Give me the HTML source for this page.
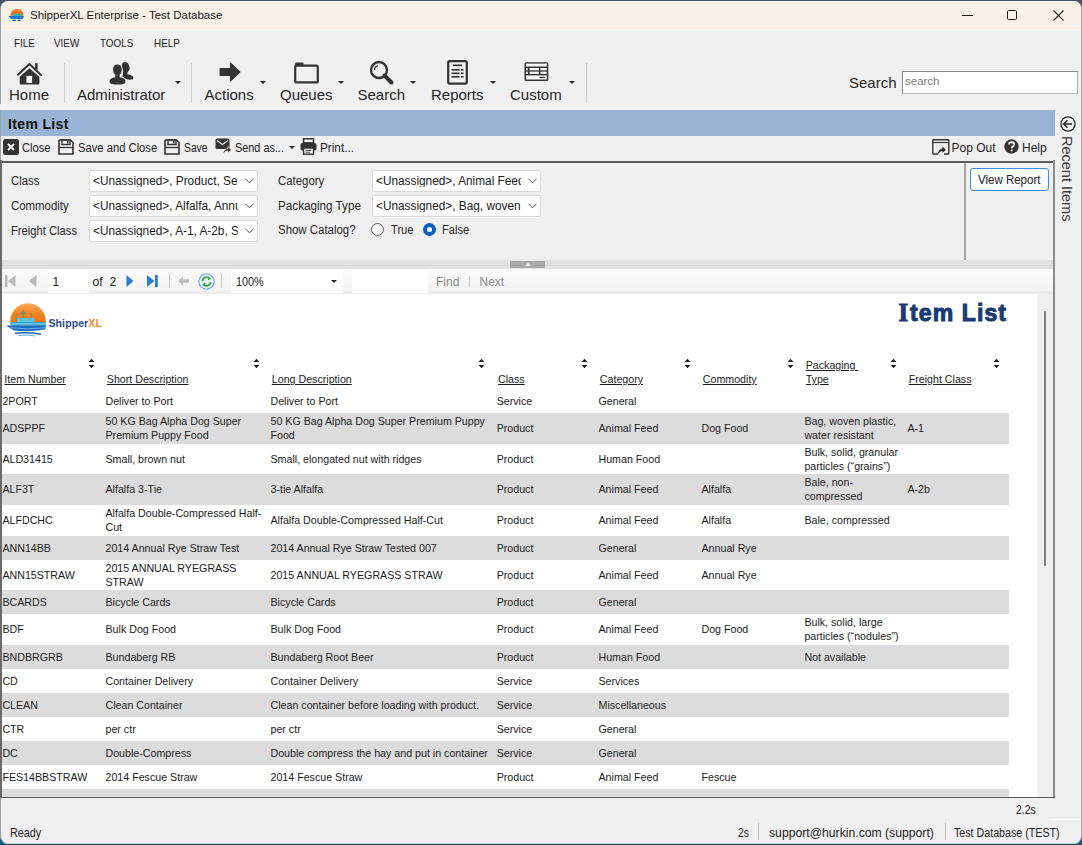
<!DOCTYPE html>
<html><head><meta charset="utf-8"><title>ShipperXL</title><style>*{margin:0;padding:0;box-sizing:border-box}
html,body{width:1082px;height:845px;overflow:hidden}
body{position:relative;background:linear-gradient(#4a5468 0,#4a5468 20px,#1c5a72 825px,#0f5a80 845px);font-family:"Liberation Sans",sans-serif;color:#1e1e1e}
.a{position:absolute;white-space:nowrap;line-height:1}
.ui{font-size:11.5px;color:#222}
.tb{font-size:15px;color:#262626}
.sep{position:absolute;width:1px;background:#cfcfcf}
.dd{position:absolute;width:0;height:0;border-left:3px solid transparent;border-right:3px solid transparent;border-top:3px solid #222}
.r{font-size:10.67px;color:#1c1c1c;position:absolute;white-space:nowrap;line-height:14px}
.hd{font-size:10.67px;color:#1c1c1c;position:absolute;white-space:nowrap;text-decoration:underline;line-height:14px}
svg{position:absolute;overflow:visible}</style></head><body>
<div class="a" style="left:0;top:1px;width:1082px;height:843px;background:#f0f0f0;border-radius:8px;border-left:1px solid #98a2ac;border-right:1px solid #a4a6a8;border-bottom:1px solid #c8d4d8"></div>
<div class="a" style="left:1px;top:1px;width:1080px;height:30px;background:linear-gradient(#f9f1e8 0,#f9f1e8 27px,#f8f4ea 28px,#f4f2ee 30px);border-radius:8px 8px 0 0;border-top:1px solid #f4f4f4"></div>
<svg style="left:8px;top:8px" width="17" height="14" viewBox="0 0 17 14">
<path d="M2.3 7.8 A6.7 6.7 0 0 1 15.7 7.8 Z" fill="#f46a1c"/>
<path d="M4.5 3.5 L6.5 1.8 L8 3 L10 1.5 L12.5 3.5 Z" fill="#f7902e"/>
<rect x="4.5" y="5.6" width="9" height="2.4" fill="#2fb0a8"/>
<path d="M0.3 8.1 L16.2 8.1 L14.6 11 L3 11 Z" fill="#1b78cc"/>
<path d="M4.5 12.4 L8 12.4 M9.5 12.4 L12.5 12.4" stroke="#2355b0" stroke-width="1.1"/>
</svg>
<div class="a" style="left:30px;top:10px;font-size:11.5px;color:#1a1a1a">ShipperXL Enterprise - Test Database</div>
<div class="a" style="left:962px;top:15px;width:11px;height:1px;background:#1a1a1a"></div>
<div class="a" style="left:1007px;top:10px;width:10px;height:10px;border:1px solid #1a1a1a;border-radius:1.5px"></div>
<svg style="left:1053px;top:10px" width="11" height="11" viewBox="0 0 11 11"><path d="M0.5 0.5 L10.5 10.5 M10.5 0.5 L0.5 10.5" stroke="#222" stroke-width="1.1"/></svg>
<div class="a" style="left:13.5px;top:38px;font-size:11.5px;color:#1e1e1e;transform:scaleX(0.86);transform-origin:0 0">FILE</div>
<div class="a" style="left:53.5px;top:38px;font-size:11.5px;color:#1e1e1e;transform:scaleX(0.86);transform-origin:0 0">VIEW</div>
<div class="a" style="left:99.5px;top:38px;font-size:11.5px;color:#1e1e1e;transform:scaleX(0.86);transform-origin:0 0">TOOLS</div>
<div class="a" style="left:153.5px;top:38px;font-size:11.5px;color:#1e1e1e;transform:scaleX(0.86);transform-origin:0 0">HELP</div>
<div class="sep" style="left:64px;top:63px;height:40px"></div>
<div class="sep" style="left:191px;top:63px;height:40px"></div>
<div class="sep" style="left:586px;top:63px;height:40px"></div>
<div class="a tb" style="left:9px;top:87px">Home</div>
<div class="a tb" style="left:77px;top:87px">Administrator</div>
<div class="a tb" style="left:204.5px;top:87px">Actions</div>
<div class="a tb" style="left:280px;top:87px">Queues</div>
<div class="a tb" style="left:357.5px;top:87px">Search</div>
<div class="a tb" style="left:431px;top:87px">Reports</div>
<div class="a tb" style="left:510px;top:87px">Custom</div>
<div class="dd" style="left:175px;top:81px"></div>
<div class="dd" style="left:260px;top:81px"></div>
<div class="dd" style="left:338px;top:81px"></div>
<div class="dd" style="left:410px;top:81px"></div>
<div class="dd" style="left:490px;top:81px"></div>
<div class="dd" style="left:569px;top:81px"></div>
<svg style="left:17px;top:62px" width="26" height="24" viewBox="0 0 26 24">
<path d="M1 12.8 L12.4 2 L24 13" fill="none" stroke="#333333" stroke-width="1.9" stroke-linecap="round" stroke-linejoin="round"/>
<rect x="18.1" y="1.2" width="2.5" height="6.5" fill="#333333"/>
<path d="M2.7 14.8 L12.4 6.3 L22.4 14.8 L22.4 21.6 Q22.4 22.6 21.4 22.6 L3.7 22.6 Q2.7 22.6 2.7 21.6 Z" fill="#333333"/>
<rect x="9.4" y="13.9" width="5.7" height="7" fill="#f7f7f7"/>
</svg>
<svg style="left:108px;top:61px" width="27" height="25" viewBox="0 0 27 25">
<ellipse cx="17.6" cy="6.2" rx="3.9" ry="5.2" transform="rotate(-18 17.6 6.2)" fill="#333333"/>
<path d="M15.2 9 L19.8 9.6 L19.3 13.2 Q24.6 14 25.3 16.4 Q25.8 18.6 22.3 18.7 Q16.5 18.5 14.5 15.5 Z" fill="#333333"/>
<path d="M9.4 2.6 Q14.6 2.6 14.6 8.7 Q14.6 12.5 12.4 14.1 L12.5 15.4 Q18.3 16.2 18.3 20.4 Q18.3 24.3 9.45 24.3 Q0.7 24.3 0.7 20.4 Q0.7 16.2 6.4 15.4 L6.5 14.1 Q4.2 12.5 4.2 8.7 Q4.2 2.6 9.4 2.6 Z" fill="#f0f0f0"/>
<path d="M9.4 3.6 Q13.7 3.6 13.7 8.7 Q13.7 12.2 11.6 13.8 L11.7 16.2 Q17.5 16.9 17.5 20.4 Q17.5 23.6 9.45 23.6 Q1.5 23.6 1.5 20.4 Q1.5 16.9 7.2 16.2 L7.3 13.8 Q5.1 12.2 5.1 8.7 Q5.1 3.6 9.4 3.6 Z" fill="#333333"/>
</svg>
<svg style="left:219px;top:62px" width="22" height="20" viewBox="0 0 22 20">
<path d="M1.5 6 Q0.5 6 0.5 7 L0.5 13 Q0.5 14 1.5 14 L11 14 L11 18.5 Q11 20 12.3 19 L21 10.8 Q21.8 10 21 9.2 L12.3 1 Q11 0 11 1.5 L11 6 Z" fill="#333333"/>
</svg>
<svg style="left:294px;top:62px" width="25" height="21" viewBox="0 0 25 21">
<rect x="1.2" y="3.6" width="22.6" height="16.8" rx="1.5" fill="none" stroke="#333333" stroke-width="2.2"/>
<path d="M1.2 4 L1.2 1.5 Q1.2 0.5 2.2 0.5 L8.5 0.5 Q9.3 0.5 9.5 1.5 L9.8 3.6 Z" fill="#333333"/>
</svg>
<svg style="left:369px;top:60px" width="25" height="25" viewBox="0 0 25 25">
<circle cx="10" cy="10" r="8" fill="none" stroke="#333333" stroke-width="2.4"/>
<path d="M5.5 10 A4.5 4.5 0 0 1 9 5.6" fill="none" stroke="#333333" stroke-width="1.3"/>
<path d="M15.5 15.5 L22.5 22.5" stroke="#333333" stroke-width="4" stroke-linecap="round"/>
</svg>
<svg style="left:447px;top:60px" width="21" height="25" viewBox="0 0 21 25">
<rect x="1.2" y="1.2" width="18.6" height="22.4" rx="1.5" fill="none" stroke="#333333" stroke-width="2.2"/>
<rect x="6" y="4.5" width="9" height="1.6" fill="#333333"/>
<rect x="4.5" y="9" width="8" height="1.6" fill="#333333"/><rect x="14" y="9" width="2.5" height="1.6" fill="#333333"/>
<rect x="4.5" y="12.5" width="8" height="1.6" fill="#333333"/><rect x="14" y="12.5" width="2.5" height="1.6" fill="#333333"/>
<rect x="4.5" y="16" width="8" height="1.6" fill="#333333"/><rect x="14" y="16" width="2.5" height="1.6" fill="#333333"/>
</svg>
<svg style="left:524px;top:62px" width="25" height="19" viewBox="0 0 25 19">
<rect x="0.5" y="0.2" width="23.8" height="18.8" rx="1.6" fill="#333333"/>
<rect x="2" y="1.6" width="20.8" height="2.9" fill="#fafafa"/>
<rect x="2" y="6" width="1.8" height="2.3" fill="#fafafa"/><rect x="5.6" y="6" width="9.3" height="2.3" fill="#fafafa"/><rect x="16.5" y="6" width="6.3" height="2.3" fill="#fafafa"/>
<rect x="2" y="9.6" width="1.8" height="2.3" fill="#fafafa"/><rect x="5.6" y="9.6" width="9.3" height="2.3" fill="#fafafa"/><rect x="16.5" y="9.6" width="6.3" height="2.3" fill="#fafafa"/>
<rect x="2" y="13.4" width="20.8" height="4.1" fill="#fafafa"/>
<rect x="15.5" y="14.8" width="5.7" height="1.3" fill="#333333"/>
</svg>
<div class="a tb" style="left:849px;top:75px">Search</div>
<div class="a" style="left:902px;top:71px;width:176px;height:23px;background:#fff;border:1px solid #8a8a8a;border-bottom-color:#b4b4b4;border-right-color:#b4b4b4"></div>
<div class="a" style="left:905px;top:76px;font-size:11.5px;color:#7a7a7a">search</div>
<div class="a" style="left:0;top:104px;width:1055px;height:6px;background:#f3f3f3"></div>
<div class="a" style="left:1px;top:110px;width:1054px;height:26px;background:#98b3d3"></div>
<div class="a" style="left:8px;top:117px;font-size:14px;font-weight:bold;color:#111;letter-spacing:0.35px">Item List</div>
<svg style="left:3px;top:139px" width="16" height="16" viewBox="0 0 16 16"><rect x="0" y="0" width="16" height="16" rx="2.5" fill="#333"/><path d="M5 5 L11 11 M11 5 L5 11" stroke="#fff" stroke-width="1.8"/></svg>
<svg style="left:58px;top:139px" width="16" height="16" viewBox="0 0 16 16"><path d="M1.5 1 L12.5 1 L15 3.5 L15 15 L1 15 L1 1.5 Z" fill="none" stroke="#333" stroke-width="1.6"/><rect x="4" y="1" width="8" height="4.5" fill="none" stroke="#333" stroke-width="1.4"/><rect x="9" y="2" width="1.5" height="2.5" fill="#333"/><path d="M1 8.5 L15 8.5" stroke="#333" stroke-width="1.3"/></svg>
<svg style="left:164px;top:139px" width="16" height="16" viewBox="0 0 16 16"><path d="M1.5 1 L12.5 1 L15 3.5 L15 15 L1 15 L1 1.5 Z" fill="none" stroke="#333" stroke-width="1.6"/><rect x="4" y="1" width="8" height="4.5" fill="none" stroke="#333" stroke-width="1.4"/><rect x="9" y="2" width="1.5" height="2.5" fill="#333"/><path d="M1 8.5 L15 8.5" stroke="#333" stroke-width="1.3"/></svg>
<div class="a ui" style="left:22px;top:142px;font-size:12px;transform:scaleX(0.93);transform-origin:0 0">Close</div>
<div class="a ui" style="left:77.5px;top:142px;font-size:12px;transform:scaleX(0.935);transform-origin:0 0">Save and Close</div>
<div class="a ui" style="left:183.5px;top:142px;font-size:12px;transform:scaleX(0.86);transform-origin:0 0">Save</div>
<div class="a ui" style="left:234.5px;top:142px;font-size:12px;transform:scaleX(0.905);transform-origin:0 0">Send as...</div>
<div class="a ui" style="left:320px;top:142px;font-size:12px;transform:scaleX(0.98);transform-origin:0 0">Print...</div>
<svg style="left:215px;top:138px" width="17" height="17" viewBox="0 0 17 17"><rect x="0.5" y="0.5" width="14" height="10.5" rx="1.5" fill="#333"/><path d="M2 2.5 L7.5 6.5 L13 2.5" fill="none" stroke="#f0f0f0" stroke-width="1.1"/><path d="M8 16 Q8.5 11 13 10.5 L13 8.5 L16.5 12 L13 15 L13 13 Q10 13 8 16 Z" fill="#333" stroke="#f0f0f0" stroke-width="0.8"/></svg>
<div class="dd" style="left:289px;top:146px"></div>
<svg style="left:300px;top:138px" width="17" height="17" viewBox="0 0 17 17"><rect x="3.5" y="0.8" width="10" height="4" fill="none" stroke="#333" stroke-width="1.5"/><rect x="0.5" y="5" width="16" height="7.5" rx="1.8" fill="#333"/><rect x="3.5" y="10" width="10" height="6.2" fill="#f0f0f0" stroke="#333" stroke-width="1.4"/><path d="M5.5 12.3 L11.5 12.3 M5.5 14.2 L10 14.2" stroke="#333" stroke-width="0.9"/></svg>
<svg style="left:932px;top:139px" width="18" height="16" viewBox="0 0 18 16"><path d="M6 15 L1.5 15 Q0.8 15 0.8 14.2 L0.8 1.5 Q0.8 0.8 1.5 0.8 L16 0.8 Q16.8 0.8 16.8 1.5 L16.8 14.2 Q16.8 15 16 15 L12 15" fill="none" stroke="#333" stroke-width="1.4"/><path d="M0.8 3.5 L16.8 3.5" stroke="#333" stroke-width="1.2"/><path d="M6 15.5 Q6 10 10.5 9.5 L10.5 7.5 L14 10.8 L10.5 14 L10.5 12 Q8 12 6 15.5 Z" fill="#333"/></svg>
<div class="a ui" style="left:951.5px;top:142px;font-size:12px">Pop Out</div>
<svg style="left:1004px;top:139px" width="15" height="15" viewBox="0 0 15 15"><circle cx="7.5" cy="7.5" r="7.2" fill="#333"/><path d="M5 5.6 Q5 3.2 7.6 3.2 Q10.2 3.3 10.2 5.5 Q10.2 6.9 8.6 7.6 Q7.7 8 7.7 9.3" fill="none" stroke="#fff" stroke-width="1.7"/><rect x="6.8" y="10.5" width="1.8" height="1.8" fill="#fff"/></svg>
<div class="a ui" style="left:1022px;top:142px;font-size:12px">Help</div>
<div class="a" style="left:0;top:161px;width:1055px;height:2px;background:#5a5a5a"></div>
<div class="a" style="left:0;top:160px;width:2px;height:638px;background:#6a6a6a"></div>
<div class="a" style="left:1053px;top:160px;width:2px;height:638px;background:#8c8c8c"></div>
<div class="a ui" style="left:11px;top:175px;font-size:12px;color:#262626;transform:scaleX(0.95);transform-origin:0 0">Class</div>
<div class="a ui" style="left:11px;top:200px;font-size:12px;color:#262626;transform:scaleX(0.95);transform-origin:0 0">Commodity</div>
<div class="a ui" style="left:11px;top:225px;font-size:12px;color:#262626;transform:scaleX(0.934);transform-origin:0 0">Freight Class</div>
<div class="a ui" style="left:278px;top:175px;font-size:12px;color:#262626;transform:scaleX(0.95);transform-origin:0 0">Category</div>
<div class="a ui" style="left:278px;top:200px;font-size:12px;color:#262626;transform:scaleX(0.974);transform-origin:0 0">Packaging Type</div>
<div class="a ui" style="left:278px;top:224px;font-size:12px;color:#262626;transform:scaleX(0.953);transform-origin:0 0">Show Catalog?</div>
<div class="a" style="left:89px;top:170px;width:169px;height:22px;background:#fff;border:1px solid #d9d9d9;border-radius:2px;overflow:hidden"><div class="a" style="left:3px;top:4px;font-size:12px;color:#1a1a1a;width:147.2px;overflow:hidden;transform:scaleX(0.985);transform-origin:0 0">&lt;Unassigned&gt;, Product, Service</div><svg style="left:155px;top:7px" width="9" height="6" viewBox="0 0 9 6"><path d="M0.5 0.8 L4.5 4.8 L8.5 0.8" fill="none" stroke="#555" stroke-width="1"/></svg></div>
<div class="a" style="left:89px;top:195px;width:169px;height:22px;background:#fff;border:1px solid #d9d9d9;border-radius:2px;overflow:hidden"><div class="a" style="left:3px;top:4px;font-size:12px;color:#1a1a1a;width:147.2px;overflow:hidden;transform:scaleX(0.985);transform-origin:0 0">&lt;Unassigned&gt;, Alfalfa, Annual</div><svg style="left:155px;top:7px" width="9" height="6" viewBox="0 0 9 6"><path d="M0.5 0.8 L4.5 4.8 L8.5 0.8" fill="none" stroke="#555" stroke-width="1"/></svg></div>
<div class="a" style="left:89px;top:220px;width:169px;height:22px;background:#fff;border:1px solid #d9d9d9;border-radius:2px;overflow:hidden"><div class="a" style="left:3px;top:4px;font-size:12px;color:#1a1a1a;width:147.2px;overflow:hidden;transform:scaleX(0.985);transform-origin:0 0">&lt;Unassigned&gt;, A-1, A-2b, Std</div><svg style="left:155px;top:7px" width="9" height="6" viewBox="0 0 9 6"><path d="M0.5 0.8 L4.5 4.8 L8.5 0.8" fill="none" stroke="#555" stroke-width="1"/></svg></div>
<div class="a" style="left:372px;top:170px;width:169px;height:22px;background:#fff;border:1px solid #d9d9d9;border-radius:2px;overflow:hidden"><div class="a" style="left:3px;top:4px;font-size:12px;color:#1a1a1a;width:147.2px;overflow:hidden;transform:scaleX(0.985);transform-origin:0 0">&lt;Unassigned&gt;, Animal Feed</div><svg style="left:155px;top:7px" width="9" height="6" viewBox="0 0 9 6"><path d="M0.5 0.8 L4.5 4.8 L8.5 0.8" fill="none" stroke="#555" stroke-width="1"/></svg></div>
<div class="a" style="left:372px;top:195px;width:169px;height:22px;background:#fff;border:1px solid #d9d9d9;border-radius:2px;overflow:hidden"><div class="a" style="left:3px;top:4px;font-size:12px;color:#1a1a1a;width:147.2px;overflow:hidden;transform:scaleX(0.985);transform-origin:0 0">&lt;Unassigned&gt;, Bag, woven plastic</div><svg style="left:155px;top:7px" width="9" height="6" viewBox="0 0 9 6"><path d="M0.5 0.8 L4.5 4.8 L8.5 0.8" fill="none" stroke="#555" stroke-width="1"/></svg></div>
<div class="a" style="left:371px;top:223px;width:13px;height:13px;border:1px solid #5a5a5a;border-radius:50%;background:#fff"></div>
<div class="a ui" style="left:391px;top:224px;font-size:12px;color:#262626;transform:scaleX(0.93);transform-origin:0 0">True</div>
<div class="a" style="left:423px;top:223px;width:13px;height:13px;border-radius:50%;background:#0a5fc4"></div>
<div class="a" style="left:427px;top:227px;width:5px;height:5px;border-radius:50%;background:#fff"></div>
<div class="a ui" style="left:442px;top:224px;font-size:12px;color:#262626;transform:scaleX(0.93);transform-origin:0 0">False</div>
<div class="a" style="left:964px;top:163px;width:2px;height:98px;background:#a4a4a4"></div>
<div class="a" style="left:970px;top:168px;width:79px;height:23px;border:1px solid #3c8fdc;border-radius:3px;background:#fdfdfd"></div>
<div class="a ui" style="left:977.5px;top:174px;font-size:12px;color:#222;transform:scaleX(0.958);transform-origin:0 0">View Report</div>
<div class="a" style="left:2px;top:260px;width:1051px;height:9px;background:#e1e1e1"></div>
<div class="a" style="left:2px;top:265px;width:1051px;height:1px;background:#dadada"></div>
<div class="a" style="left:510px;top:261px;width:35px;height:7px;background:#a9a9a9"></div>
<div class="a" style="left:525px;top:263px;width:0;height:0;border-left:3px solid transparent;border-right:3px solid transparent;border-bottom:3px solid #eee"></div>
<div class="a" style="left:2px;top:269px;width:1051px;height:25px;background:linear-gradient(#fbfbfb,#f1f1f1)"></div>
<div class="a" style="left:2px;top:291px;width:1051px;height:3px;background:#ececec"></div>
<div class="a" style="left:48px;top:269px;width:41px;height:24px;background:#fff"></div>
<div class="a" style="left:231px;top:269px;width:112px;height:24px;background:#fff"></div>
<div class="a" style="left:352px;top:269px;width:76px;height:24px;background:#fff"></div>
<div class="a ui" style="left:52.5px;top:276px;font-size:12px;color:#222">1</div>
<div class="a ui" style="left:92.5px;top:276px;font-size:12px;color:#222">of</div>
<div class="a ui" style="left:109.5px;top:276px;font-size:12px;color:#222">2</div>
<div class="a ui" style="left:235.5px;top:276px;font-size:12px;color:#222;transform:scaleX(0.9);transform-origin:0 0">100%</div>
<div class="dd" style="left:331px;top:280px;border-top-width:3px"></div>
<div class="a ui" style="left:436px;top:276px;font-size:12px;color:#8a8a8a">Find</div>
<div class="a" style="left:469px;top:276px;width:1px;height:11px;background:#c8c8c8"></div>
<div class="a ui" style="left:479.5px;top:276px;font-size:12px;color:#8a8a8a">Next</div>
<svg style="left:5px;top:275px" width="11" height="12" viewBox="0 0 11 12"><rect x="0" y="0" width="2.5" height="12" fill="#b9b9b9"/><path d="M10.5 0 L3 6 L10.5 12 Z" fill="#b9b9b9"/></svg>
<svg style="left:29px;top:275px" width="8" height="12" viewBox="0 0 8 12"><path d="M7.5 0 L0 6 L7.5 12 Z" fill="#b9b9b9"/></svg>
<svg style="left:126px;top:275px" width="8" height="12" viewBox="0 0 8 12"><path d="M0.5 0 L7.5 6 L0.5 12 Z" fill="#2a7bd6"/></svg>
<svg style="left:147px;top:275px" width="11" height="12" viewBox="0 0 11 12"><path d="M0 0 L7.5 6 L0 12 Z" fill="#2a7bd6"/><rect x="8" y="0" width="2.8" height="12" fill="#2a7bd6"/></svg>
<div class="a" style="left:169px;top:274px;width:1px;height:14px;background:#c6c6c6"></div>
<svg style="left:178px;top:276px" width="11" height="10" viewBox="0 0 11 10"><path d="M0 5 L5 0.5 L5 3.2 L11 3.2 L11 6.8 L5 6.8 L5 9.5 Z" fill="#bdbdbd"/></svg>
<svg style="left:198px;top:273px" width="17" height="17" viewBox="0 0 17 17"><circle cx="8.5" cy="8.5" r="7.7" fill="#e9f1fb" stroke="#6aa2da" stroke-width="1.1"/><path d="M4.5 8 A4 4 0 0 1 11.5 5.5" fill="none" stroke="#3aa83a" stroke-width="1.8"/><path d="M10 3.5 L13 5.8 L10 7.5 Z" fill="#3aa83a"/><path d="M12.5 9 A4 4 0 0 1 5.5 11.5" fill="none" stroke="#3aa83a" stroke-width="1.8"/><path d="M7 13.5 L4 11.2 L7 9.5 Z" fill="#3aa83a"/></svg>
<div class="a" style="left:221px;top:274px;width:1px;height:14px;background:#c6c6c6"></div>
<div class="a" style="left:2px;top:294px;width:1035px;height:503px;background:#fff"></div>
<div class="a" style="left:1037px;top:294px;width:16px;height:503px;background:#efefef"></div>
<div class="a" style="left:1044px;top:311px;width:2px;height:255px;background:#7d7d7d;border-radius:1px"></div>
<div class="a" style="left:0;top:797px;width:1055px;height:1px;background:#5a5a5a"></div>
<svg style="left:5px;top:302px" width="42" height="35" viewBox="0 0 42 35">
<defs><linearGradient id="og" x1="0" y1="0" x2="0" y2="1"><stop offset="0" stop-color="#f9a85a"/><stop offset="0.5" stop-color="#f4841f"/><stop offset="1" stop-color="#ef6c10"/></linearGradient></defs>
<path d="M5.65 23 A17.8 17.8 0 1 1 40.35 23 Z" fill="url(#og)"/>
<rect x="17.6" y="8" width="1.6" height="8" fill="#6f8f70"/><rect x="15.3" y="10.5" width="6.2" height="1.3" fill="#6f8f70"/>
<rect x="10.5" y="12.5" width="1.4" height="5" fill="#6f8f70"/><rect x="25.5" y="11.5" width="1.4" height="6" fill="#6f8f70"/>
<rect x="12" y="16" width="17.5" height="4.5" fill="#5cc2d8"/>
<rect x="5.5" y="20" width="35.5" height="3.8" fill="#3aa8d5"/>
<rect x="5.5" y="21.6" width="35.5" height="0.7" fill="#a6def0"/>
<path d="M1 23.5 L41 23.5 L40.2 27.6 Q24 30.2 9 28.6 Z" fill="#1d6cc0"/>
<path d="M4 25.6 Q22 28 40.5 25.8" fill="none" stroke="#6fb8e8" stroke-width="0.9"/>
<path d="M10 31.3 Q22 29.8 36 32.2" fill="none" stroke="#1e62b6" stroke-width="1.6"/>
<path d="M13.5 33.6 Q22 32.2 30 34" fill="none" stroke="#52b2e2" stroke-width="1.2"/>
</svg>
<div class="a" style="left:48.5px;top:318px;font-size:10.5px;font-weight:bold;color:#2b4b8c;letter-spacing:0.1px">Shipper<span style="color:#f28a1e">XL</span></div>
<div class="a" style="left:898.5px;top:300.5px;font-size:23px;font-weight:bold;color:#1b3a73;letter-spacing:1.1px;-webkit-text-stroke:1px #1b3a73"><span style="font-family:&quot;Liberation Serif&quot;;font-size:24.5px;letter-spacing:2px">I</span>tem List</div>
<div class="hd" style="left:4.3px;top:372px">Item Number</div>
<svg style="left:87.5px;top:358px" width="7" height="11" viewBox="0 0 7 11"><path d="M0.5 4 L3.5 0.8 L6.5 4 Z M0.5 7 L3.5 10.2 L6.5 7 Z" fill="#222"/></svg>
<div class="hd" style="left:106.8px;top:372px">Short Description</div>
<svg style="left:252.5px;top:358px" width="7" height="11" viewBox="0 0 7 11"><path d="M0.5 4 L3.5 0.8 L6.5 4 Z M0.5 7 L3.5 10.2 L6.5 7 Z" fill="#222"/></svg>
<div class="hd" style="left:271.8px;top:372px">Long Description</div>
<svg style="left:478px;top:358px" width="7" height="11" viewBox="0 0 7 11"><path d="M0.5 4 L3.5 0.8 L6.5 4 Z M0.5 7 L3.5 10.2 L6.5 7 Z" fill="#222"/></svg>
<div class="hd" style="left:498.0px;top:372px">Class</div>
<svg style="left:580.5px;top:358px" width="7" height="11" viewBox="0 0 7 11"><path d="M0.5 4 L3.5 0.8 L6.5 4 Z M0.5 7 L3.5 10.2 L6.5 7 Z" fill="#222"/></svg>
<div class="hd" style="left:599.8px;top:372px">Category</div>
<svg style="left:683.5px;top:358px" width="7" height="11" viewBox="0 0 7 11"><path d="M0.5 4 L3.5 0.8 L6.5 4 Z M0.5 7 L3.5 10.2 L6.5 7 Z" fill="#222"/></svg>
<div class="hd" style="left:702.8px;top:372px">Commodity</div>
<svg style="left:786.5px;top:358px" width="7" height="11" viewBox="0 0 7 11"><path d="M0.5 4 L3.5 0.8 L6.5 4 Z M0.5 7 L3.5 10.2 L6.5 7 Z" fill="#222"/></svg>
<div class="hd" style="left:805.6999999999999px;top:358px">Packaging&nbsp;</div>
<div class="hd" style="left:805.6999999999999px;top:372px">Type</div>
<svg style="left:889.5px;top:358px" width="7" height="11" viewBox="0 0 7 11"><path d="M0.5 4 L3.5 0.8 L6.5 4 Z M0.5 7 L3.5 10.2 L6.5 7 Z" fill="#222"/></svg>
<div class="hd" style="left:908.6999999999999px;top:372px">Freight Class</div>
<svg style="left:992.5px;top:358px" width="7" height="11" viewBox="0 0 7 11"><path d="M0.5 4 L3.5 0.8 L6.5 4 Z M0.5 7 L3.5 10.2 L6.5 7 Z" fill="#222"/></svg>
<div class="r" style="left:2.4px;top:394.0px">2PORT</div>
<div class="r" style="left:105.5px;top:394.0px">Deliver to Port</div>
<div class="r" style="left:270.5px;top:394.0px">Deliver to Port</div>
<div class="r" style="left:496.7px;top:394.0px">Service</div>
<div class="r" style="left:598.5px;top:394.0px">General</div>
<div class="a" style="left:2px;top:413px;width:1006.5px;height:31px;background:#dcdcdc"></div>
<div class="r" style="left:2.4px;top:421.0px">ADSPPF</div>
<div class="r" style="left:105.5px;top:414.0px">50 KG Bag Alpha Dog Super<br>Premium Puppy Food</div>
<div class="r" style="left:270.5px;top:414.0px">50 KG Bag Alpha Dog Super Premium Puppy<br>Food</div>
<div class="r" style="left:496.7px;top:421.0px">Product</div>
<div class="r" style="left:598.5px;top:421.0px">Animal Feed</div>
<div class="r" style="left:701.5px;top:421.0px">Dog Food</div>
<div class="r" style="left:804.4px;top:414.0px">Bag, woven plastic,<br>water resistant</div>
<div class="r" style="left:907.4px;top:421.0px">A-1</div>
<div class="r" style="left:2.4px;top:452.0px">ALD31415</div>
<div class="r" style="left:105.5px;top:452.0px">Small, brown nut</div>
<div class="r" style="left:270.5px;top:452.0px">Small, elongated nut with ridges</div>
<div class="r" style="left:496.7px;top:452.0px">Product</div>
<div class="r" style="left:598.5px;top:452.0px">Human Food</div>
<div class="r" style="left:804.4px;top:445.0px">Bulk, solid, granular<br>particles (&#8220;grains&#8221;)</div>
<div class="a" style="left:2px;top:474px;width:1006.5px;height:31px;background:#dcdcdc"></div>
<div class="r" style="left:2.4px;top:482.0px">ALF3T</div>
<div class="r" style="left:105.5px;top:482.0px">Alfalfa 3-Tie</div>
<div class="r" style="left:270.5px;top:482.0px">3-tie Alfalfa</div>
<div class="r" style="left:496.7px;top:482.0px">Product</div>
<div class="r" style="left:598.5px;top:482.0px">Animal Feed</div>
<div class="r" style="left:701.5px;top:482.0px">Alfalfa</div>
<div class="r" style="left:804.4px;top:475.0px">Bale, non-<br>compressed</div>
<div class="r" style="left:907.4px;top:482.0px">A-2b</div>
<div class="r" style="left:2.4px;top:513.0px">ALFDCHC</div>
<div class="r" style="left:105.5px;top:506.0px">Alfalfa Double-Compressed Half-<br>Cut</div>
<div class="r" style="left:270.5px;top:513.0px">Alfalfa Double-Compressed Half-Cut</div>
<div class="r" style="left:496.7px;top:513.0px">Product</div>
<div class="r" style="left:598.5px;top:513.0px">Animal Feed</div>
<div class="r" style="left:701.5px;top:513.0px">Alfalfa</div>
<div class="r" style="left:804.4px;top:513.0px">Bale, compressed</div>
<div class="a" style="left:2px;top:536px;width:1006.5px;height:24px;background:#dcdcdc"></div>
<div class="r" style="left:2.4px;top:541.0px">ANN14BB</div>
<div class="r" style="left:105.5px;top:541.0px">2014 Annual Rye Straw Test</div>
<div class="r" style="left:270.5px;top:541.0px">2014 Annual Rye Straw Tested 007</div>
<div class="r" style="left:496.7px;top:541.0px">Product</div>
<div class="r" style="left:598.5px;top:541.0px">General</div>
<div class="r" style="left:701.5px;top:541.0px">Annual Rye</div>
<div class="r" style="left:2.4px;top:568.0px">ANN15STRAW</div>
<div class="r" style="left:105.5px;top:561.0px">2015 ANNUAL RYEGRASS<br>STRAW</div>
<div class="r" style="left:270.5px;top:568.0px">2015 ANNUAL RYEGRASS STRAW</div>
<div class="r" style="left:496.7px;top:568.0px">Product</div>
<div class="r" style="left:598.5px;top:568.0px">Animal Feed</div>
<div class="r" style="left:701.5px;top:568.0px">Annual Rye</div>
<div class="a" style="left:2px;top:590px;width:1006.5px;height:24px;background:#dcdcdc"></div>
<div class="r" style="left:2.4px;top:595.0px">BCARDS</div>
<div class="r" style="left:105.5px;top:595.0px">Bicycle Cards</div>
<div class="r" style="left:270.5px;top:595.0px">Bicycle Cards</div>
<div class="r" style="left:496.7px;top:595.0px">Product</div>
<div class="r" style="left:598.5px;top:595.0px">General</div>
<div class="r" style="left:2.4px;top:622.0px">BDF</div>
<div class="r" style="left:105.5px;top:622.0px">Bulk Dog Food</div>
<div class="r" style="left:270.5px;top:622.0px">Bulk Dog Food</div>
<div class="r" style="left:496.7px;top:622.0px">Product</div>
<div class="r" style="left:598.5px;top:622.0px">Animal Feed</div>
<div class="r" style="left:701.5px;top:622.0px">Dog Food</div>
<div class="r" style="left:804.4px;top:615.0px">Bulk, solid, large<br>particles (&#8220;nodules&#8221;)</div>
<div class="a" style="left:2px;top:645px;width:1006.5px;height:24px;background:#dcdcdc"></div>
<div class="r" style="left:2.4px;top:650.0px">BNDBRGRB</div>
<div class="r" style="left:105.5px;top:650.0px">Bundaberg RB</div>
<div class="r" style="left:270.5px;top:650.0px">Bundaberg Root Beer</div>
<div class="r" style="left:496.7px;top:650.0px">Product</div>
<div class="r" style="left:598.5px;top:650.0px">Human Food</div>
<div class="r" style="left:804.4px;top:650.0px">Not available</div>
<div class="r" style="left:2.4px;top:674.0px">CD</div>
<div class="r" style="left:105.5px;top:674.0px">Container Delivery</div>
<div class="r" style="left:270.5px;top:674.0px">Container Delivery</div>
<div class="r" style="left:496.7px;top:674.0px">Service</div>
<div class="r" style="left:598.5px;top:674.0px">Services</div>
<div class="a" style="left:2px;top:693px;width:1006.5px;height:24px;background:#dcdcdc"></div>
<div class="r" style="left:2.4px;top:698.0px">CLEAN</div>
<div class="r" style="left:105.5px;top:698.0px">Clean Container</div>
<div class="r" style="left:270.5px;top:698.0px">Clean container before loading with product.</div>
<div class="r" style="left:496.7px;top:698.0px">Service</div>
<div class="r" style="left:598.5px;top:698.0px">Miscellaneous</div>
<div class="r" style="left:2.4px;top:722.0px">CTR</div>
<div class="r" style="left:105.5px;top:722.0px">per ctr</div>
<div class="r" style="left:270.5px;top:722.0px">per ctr</div>
<div class="r" style="left:496.7px;top:722.0px">Service</div>
<div class="r" style="left:598.5px;top:722.0px">General</div>
<div class="a" style="left:2px;top:741px;width:1006.5px;height:24px;background:#dcdcdc"></div>
<div class="r" style="left:2.4px;top:746.0px">DC</div>
<div class="r" style="left:105.5px;top:746.0px">Double-Compress</div>
<div class="r" style="left:270.5px;top:746.0px">Double compress the hay and put in container</div>
<div class="r" style="left:496.7px;top:746.0px">Service</div>
<div class="r" style="left:598.5px;top:746.0px">General</div>
<div class="r" style="left:2.4px;top:770.0px">FES14BBSTRAW</div>
<div class="r" style="left:105.5px;top:770.0px">2014 Fescue Straw</div>
<div class="r" style="left:270.5px;top:770.0px">2014 Fescue Straw</div>
<div class="r" style="left:496.7px;top:770.0px">Product</div>
<div class="r" style="left:598.5px;top:770.0px">Animal Feed</div>
<div class="r" style="left:701.5px;top:770.0px">Fescue</div>
<div class="a" style="left:2px;top:789px;width:1006.5px;height:8px;background:#dcdcdc"></div>
<div class="a ui" style="left:1015.5px;top:804px;font-size:12px;color:#222;transform:scaleX(0.87);transform-origin:0 0">2.2s</div>
<div class="a" style="left:1052px;top:819px;width:29px;height:1px;background:#fafafa"></div>
<div class="a ui" style="left:9.5px;top:827px;font-size:12px;color:#222;transform:scaleX(0.9);transform-origin:0 0">Ready</div>
<div class="a ui" style="left:738px;top:827px;font-size:12px;color:#222;transform:scaleX(0.87);transform-origin:0 0">2s</div>
<div class="a" style="left:758px;top:823px;width:1px;height:17px;background:#bcbcbc"></div>
<div class="a ui" style="left:768.5px;top:827px;font-size:12px;color:#222;transform:scaleX(1.016);transform-origin:0 0">support@hurkin.com (support)</div>
<div class="a" style="left:945px;top:823px;width:1px;height:17px;background:#bcbcbc"></div>
<div class="a ui" style="left:954px;top:827px;font-size:12px;color:#222;transform:scaleX(0.89);transform-origin:0 0">Test Database (TEST)</div>
<svg style="left:1060px;top:116px" width="16" height="16" viewBox="0 0 16 16"><circle cx="8" cy="8" r="7.1" fill="none" stroke="#2a2a2a" stroke-width="1.3"/><path d="M3.8 8 L12 8" stroke="#2a2a2a" stroke-width="1.6"/><path d="M7.5 4.2 L3.6 8 L7.5 11.8" fill="none" stroke="#2a2a2a" stroke-width="1.6"/></svg>
<div class="a" style="left:1074px;top:136px;font-size:14.5px;color:#3c3c3c;transform:rotate(90deg);transform-origin:0 0">Recent Items</div>
<div class="a" style="left:0;top:844px;width:1082px;height:1px;background:#1c5266"></div>
</body></html>
